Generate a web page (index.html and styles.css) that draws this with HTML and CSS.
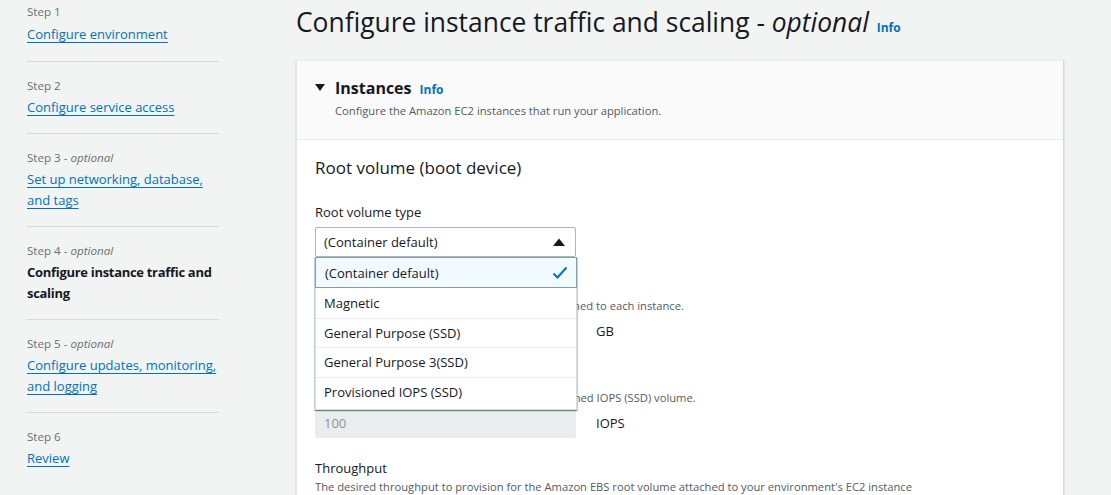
FILE: index.html
```html
<!DOCTYPE html>
<html>
<head>
<meta charset="utf-8">
<link rel="stylesheet" href="styles.css">
</head>
<body>
<div class="page">
  <nav class="steps">
    <div class="step first">
      <div class="step-label">Step 1</div>
      <a class="step-link" href="#">Configure environment</a>
    </div>
    <div class="step">
      <div class="step-label">Step 2</div>
      <a class="step-link" href="#">Configure service access</a>
    </div>
    <div class="step">
      <div class="step-label">Step 3 - <i>optional</i></div>
      <a class="step-link" href="#">Set up networking, database, and tags</a>
    </div>
    <div class="step">
      <div class="step-label">Step 4 - <i>optional</i></div>
      <div class="step-current">Configure instance traffic and scaling</div>
    </div>
    <div class="step">
      <div class="step-label">Step 5 - <i>optional</i></div>
      <a class="step-link" href="#">Configure updates, monitoring, and logging</a>
    </div>
    <div class="step last">
      <div class="step-label">Step 6</div>
      <a class="step-link" href="#">Review</a>
    </div>
  </nav>

  <main class="main">
    <h1 class="page-title">Configure instance traffic and scaling - <i>optional</i> <a class="info" href="#">Info</a></h1>

    <section class="container">
      <header class="container-header">
        <div class="container-title">
          <svg class="caret" width="10" height="8" viewBox="0 0 10 8"><polygon points="0,0 10,0 5,7" fill="#16191f"/></svg>
          <span class="title-text">Instances</span>
          <a class="info info-title" href="#">Info</a>
        </div>
        <div class="container-desc">Configure the Amazon EC2 instances that run your application.</div>
      </header>

      <div class="container-body">
        <h2 class="sub-title">Root volume (boot device)</h2>

        <div class="field">
          <div class="field-label">Root volume type</div>
          <div class="select-wrap">
            <div class="select">
              <span>(Container default)</span>
              <svg width="12" height="8" viewBox="0 0 12 8"><polygon points="0,8 12,8 6,0.5" fill="#16191f"/></svg>
            </div>
            <ul class="dropdown">
              <li class="option selected">
                <span>(Container default)</span>
                <svg width="16" height="14" viewBox="0 0 16 14"><polyline points="1.5,7.5 5.5,11.5 14.5,1.5" fill="none" stroke="#0073bb" stroke-width="2"/></svg>
              </li>
              <li class="option">Magnetic</li>
              <li class="option">General Purpose (SSD)</li>
              <li class="option">General Purpose 3(SSD)</li>
              <li class="option">Provisioned IOPS (SSD)</li>
            </ul>
          </div>
        </div>

        <div class="field field-size">
          <div class="field-label">Size</div>
          <div class="field-desc">The number of gigabytes of the root volume attached to each instance.</div>
          <div class="input-row">
            <div class="input"></div>
            <span class="unit">GB</span>
          </div>
        </div>

        <div class="field">
          <div class="field-label">IOPS</div>
          <div class="field-desc">Input/output operations per second for a provisioned IOPS (SSD) volume.</div>
          <div class="input-row">
            <div class="input disabled">100</div>
            <span class="unit">IOPS</span>
          </div>
        </div>

        <div class="field">
          <div class="field-label">Throughput</div>
          <div class="field-desc">The desired throughput to provision for the Amazon EBS root volume attached to your environment's EC2 instance</div>
        </div>
      </div>
    </section>
  </main>
</div>
</body>
</html>
```
FILE: styles.css
```css
* { box-sizing: border-box; }
html, body {
  margin: 0;
  padding: 0;
  background: #f2f3f3;
  font-family: "Open Sans", "Noto Sans", Arial, sans-serif;
  color: #16191f;
  overflow: hidden;
}
.page {
  display: flex;
  align-items: flex-start;
  padding-left: 27px;
  height: 495px;
}
.steps {
  width: 192px;
  flex: none;
  margin-top: -10px;
}
.step {
  padding: 16px 0 15px;
  border-bottom: 1px solid #d5dbdb;
}
.step.first { padding-top: 14px; padding-bottom: 16px; }
.step.first .step-label { margin-bottom: 4px; }
.step.last { border-bottom: none; }
.step-label {
  font-size: 11.6px;
  line-height: 16px;
  color: #687078;
  margin-bottom: 3px;
}
.step-label i { font-style: italic; }
.step-link, .step-current {
  display: block;
  font-size: 13px;
  line-height: 21px;
}
.step-link {
  color: #0073bb;
  text-decoration: underline;
  text-underline-offset: 3px;
}
.step-current {
  font-weight: 700;
  color: #16191f;
  letter-spacing: -0.3px;
}
.main {
  margin-left: 77px;
  width: 768px;
  flex: none;
}
.page-title {
  margin: 4px 0 20px;
  height: 36px;
  font-size: 26.4px;
  line-height: 36px;
  font-weight: 400;
  color: #16191f;
  white-space: nowrap;
}
.page-title i { font-style: italic; }
.info {
  color: #0073bb;
  font-size: 12px;
  font-weight: 700;
  text-decoration: none;
}
.page-title .info { margin-left: 1px; }
.container {
  background: #fff;
  border-top: 1px solid #eaeded;
  border-left: 1px solid #e3e6e6;
  border-right: 1px solid #d5dbdb;
  box-shadow: 0 1px 1px 0 rgba(0, 28, 36, 0.3);
}
.container-header {
  background: #fafafa;
  border-bottom: 1px solid #eaeded;
  padding: 15px 18px 20px;
}
.container-title {
  display: flex;
  align-items: center;
  height: 24px;
}
.caret { margin-right: 10px; }
.title-text {
  font-size: 16px;
  font-weight: 700;
}
.info-title { margin-left: 8px; margin-top: 2px; }
.container-desc {
  padding-left: 20px;
  font-size: 11.2px;
  line-height: 16px;
  color: #545b64;
  margin-top: 3px;
}
.container-body {
  padding: 15px 18px 0;
  height: 360px;
}
.sub-title {
  margin: 0 0 22px;
  font-size: 17px;
  line-height: 26px;
  font-weight: 400;
}
.field { margin-bottom: 21px; }
.field.field-size { margin-bottom: 24px; }
.field-label {
  font-size: 13px;
  line-height: 18px;
}
.field-desc {
  font-size: 11.2px;
  line-height: 16px;
  color: #545b64;
  margin-top: 2px;
}
.select-wrap {
  position: relative;
  width: 261px;
  margin-top: 6px;
}
.select {
  height: 30px;
  border: 1px solid #aab7b8;
  border-radius: 2px;
  background: #fff;
  display: flex;
  align-items: center;
  justify-content: space-between;
  padding: 0 10px 0 8px;
  font-size: 13px;
}
.dropdown {
  position: absolute;
  left: 0;
  top: 30px;
  width: 262px;
  margin: 0;
  padding: 0 0 3px;
  list-style: none;
  background: #fff;
  border: 1px solid #d5dbdb;
  border-top: none;
  box-shadow: 0 1px 1px 0 rgba(0, 28, 36, 0.3), 1px 1px 1px 0 rgba(0, 28, 36, 0.15), -1px 1px 1px 0 rgba(0, 28, 36, 0.15);
  z-index: 5;
}
.option {
  height: 29.5px;
  display: flex;
  align-items: center;
  padding: 0 8px;
  font-size: 13px;
  border-top: 1px solid #eaeded;
}
.option:first-child { border-top: none; }
.option.selected {
  justify-content: space-between;
  background: #f1faff;
  border: 1px solid #8c9ba3;
  margin: 0 -1px;
  height: 31px;
  padding: 0 8px 0 9px;
}
.option.selected + .option { border-top: none; }
.input-row {
  display: flex;
  align-items: center;
  margin-top: 2px;
}
.input {
  width: 261px;
  height: 30px;
  border: 1px solid #aab7b8;
  border-radius: 2px;
  background: #fff;
  font-size: 13px;
  line-height: 28px;
  padding: 0 8px;
}
.input.disabled {
  background: #eaeded;
  border-color: #eaeded;
  color: #879596;
}
.unit {
  margin-left: 20px;
  font-size: 13px;
}
```
